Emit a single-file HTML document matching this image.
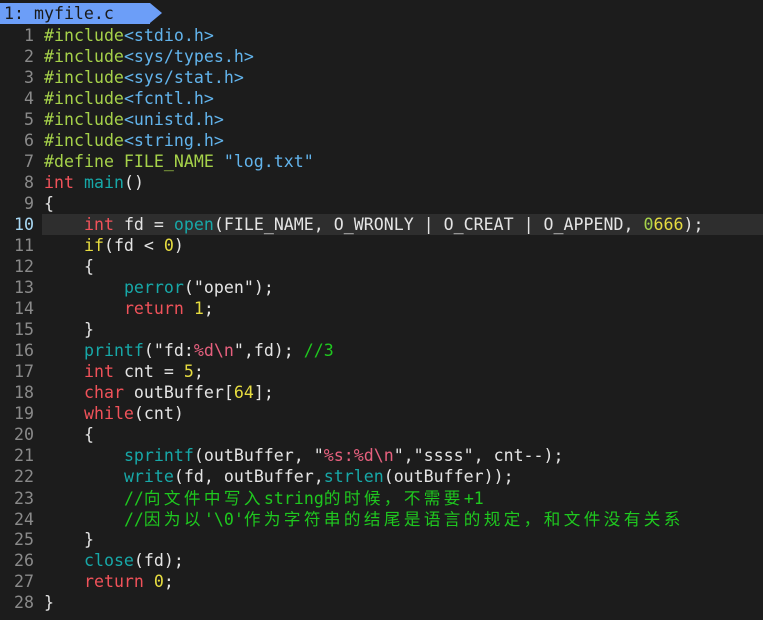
<!DOCTYPE html>
<html><head><meta charset="utf-8"><style>
html,body{margin:0;padding:0;background:#1c1c1c;width:763px;height:620px;overflow:hidden}
body{font-family:"DejaVu Sans Mono","Liberation Mono","Noto Sans CJK SC",monospace;font-size:16.6px;color:#e4e4e4}
.tab{position:absolute;left:0;top:3px;height:21px;width:150px;background:#6c9ef8;color:#1a1a1a;line-height:21px;padding-left:4px;box-sizing:border-box;white-space:pre}
.tab:after{content:"";position:absolute;left:150px;top:0;border-left:12px solid #6c9ef8;border-top:10.5px solid transparent;border-bottom:10.5px solid transparent}
.l{position:absolute;left:0;height:21px;line-height:21px;white-space:pre;width:763px}
.n{display:inline-block;width:34px;text-align:right;color:#8a8a8a;margin-right:10px}
.cur{background:linear-gradient(to right,transparent 42px,#2e2e2e 42px)}
.cur .n{color:#a8d8f4}
.p{color:#a6d24a}.h{color:#62b4ec}.k{color:#f0525a}.f{color:#17a8a8}.y{color:#e6dc40}.g{color:#a6d24a}.s{color:#e4e4e4}.e{color:#e6607e}.c{color:#1fc81f}
.z{font-family:"Noto Sans CJK SC",sans-serif;letter-spacing:3.4px}
</style></head><body>
<div class="tab">1: myfile.c</div>
<div class="l" style="top:25px"><span class="n">1</span><span class="p">#include</span><span class="h">&lt;stdio.h&gt;</span></div>
<div class="l" style="top:46px"><span class="n">2</span><span class="p">#include</span><span class="h">&lt;sys/types.h&gt;</span></div>
<div class="l" style="top:67px"><span class="n">3</span><span class="p">#include</span><span class="h">&lt;sys/stat.h&gt;</span></div>
<div class="l" style="top:88px"><span class="n">4</span><span class="p">#include</span><span class="h">&lt;fcntl.h&gt;</span></div>
<div class="l" style="top:109px"><span class="n">5</span><span class="p">#include</span><span class="h">&lt;unistd.h&gt;</span></div>
<div class="l" style="top:130px"><span class="n">6</span><span class="p">#include</span><span class="h">&lt;string.h&gt;</span></div>
<div class="l" style="top:151px"><span class="n">7</span><span class="p">#define FILE_NAME </span><span class="h">"log.txt"</span></div>
<div class="l" style="top:172px"><span class="n">8</span><span class="k">int</span> <span class="f">main</span>()</div>
<div class="l" style="top:193px"><span class="n">9</span>{</div>
<div class="l cur" style="top:214px"><span class="n">10</span>    <span class="k">int</span> fd = <span class="f">open</span>(FILE_NAME, O_WRONLY | O_CREAT | O_APPEND, <span class="g">0</span><span class="y">666</span>);</div>
<div class="l" style="top:235px"><span class="n">11</span>    <span class="y">if</span>(fd &lt; <span class="y">0</span>)</div>
<div class="l" style="top:256px"><span class="n">12</span>    {</div>
<div class="l" style="top:277px"><span class="n">13</span>        <span class="f">perror</span>("open");</div>
<div class="l" style="top:298px"><span class="n">14</span>        <span class="k">return</span> <span class="y">1</span>;</div>
<div class="l" style="top:319px"><span class="n">15</span>    }</div>
<div class="l" style="top:340px"><span class="n">16</span>    <span class="f">printf</span>("fd:<span class="e">%d\n</span>",fd); <span class="c">//3</span></div>
<div class="l" style="top:361px"><span class="n">17</span>    <span class="k">int</span> cnt = <span class="y">5</span>;</div>
<div class="l" style="top:382px"><span class="n">18</span>    <span class="k">char</span> outBuffer[<span class="y">64</span>];</div>
<div class="l" style="top:403px"><span class="n">19</span>    <span class="k">while</span>(cnt)</div>
<div class="l" style="top:424px"><span class="n">20</span>    {</div>
<div class="l" style="top:445px"><span class="n">21</span>        <span class="f">sprintf</span>(outBuffer, "<span class="e">%s:%d\n</span>","ssss", cnt--);</div>
<div class="l" style="top:466px"><span class="n">22</span>        <span class="f">write</span>(fd, outBuffer,<span class="f">strlen</span>(outBuffer));</div>
<div class="l" style="top:487px"><span class="n">23</span>        <span class="c">//<span class="z">向文件中写入</span>string<span class="z">的时候，不需要</span>+1</span></div>
<div class="l" style="top:508px"><span class="n">24</span>        <span class="c">//<span class="z">因为以</span>'\0'<span class="z">作为字符串的结尾是语言的规定，和文件没有关系</span></span></div>
<div class="l" style="top:529px"><span class="n">25</span>    }</div>
<div class="l" style="top:550px"><span class="n">26</span>    <span class="f">close</span>(fd);</div>
<div class="l" style="top:571px"><span class="n">27</span>    <span class="k">return</span> <span class="y">0</span>;</div>
<div class="l" style="top:592px"><span class="n">28</span>}</div>
</body></html>
